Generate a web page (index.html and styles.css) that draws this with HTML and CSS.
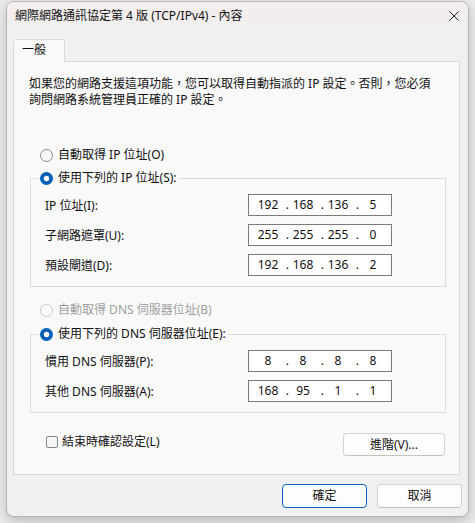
FILE: index.html
```html
<!DOCTYPE html>
<html lang="zh-Hant">
<head>
<meta charset="utf-8">
<title>網際網路通訊協定第 4 版 (TCP/IPv4) - 內容</title>
<link rel="stylesheet" href="styles.css">
</head>
<body>
<div class="window">
  <div class="titlebar">
    <span class="title">網際網路通訊協定第 4 版 (TCP/IPv4) - 內容</span>
    <span class="close"><svg width="10" height="10" viewBox="0 0 10 10"><path d="M0.5 0.5L9.5 9.5M9.5 0.5L0.5 9.5" stroke="#1b1b1b" stroke-width="1" fill="none"/></svg></span>
  </div>
  <div class="body">
    <div class="tabs"><div class="tab">一般</div></div>
    <div class="panel">
      <p class="intro">如果您的網路支援這項功能，您可以取得自動指派的 IP 設定。否則，您必須<br>詢問網路系統管理員正確的 IP 設定。</p>

      <div class="radio-row r-ip"><span class="radio"></span><span>自動取得 IP 位址(O)</span></div>
      <fieldset class="group g-ip">
        <legend><span class="radio checked"></span><span>使用下列的 IP 位址(S):</span></legend>
        <div class="fields">
          <span class="lbl">IP 位址(I):</span>
          <div class="ipbox"><span class="oct">192</span><span class="dot">.</span><span class="oct">168</span><span class="dot">.</span><span class="oct">136</span><span class="dot">.</span><span class="oct">5</span></div>
          <span class="lbl">子網路遮罩(U):</span>
          <div class="ipbox"><span class="oct">255</span><span class="dot">.</span><span class="oct">255</span><span class="dot">.</span><span class="oct">255</span><span class="dot">.</span><span class="oct">0</span></div>
          <span class="lbl">預設閘道(D):</span>
          <div class="ipbox"><span class="oct">192</span><span class="dot">.</span><span class="oct">168</span><span class="dot">.</span><span class="oct">136</span><span class="dot">.</span><span class="oct">2</span></div>
        </div>
      </fieldset>

      <div class="radio-row r-dns disabled"><span class="radio"></span><span>自動取得 DNS 伺服器位址(B)</span></div>
      <fieldset class="group g-dns">
        <legend><span class="radio checked"></span><span>使用下列的 DNS 伺服器位址(E):</span></legend>
        <div class="fields">
          <span class="lbl">慣用 DNS 伺服器(P):</span>
          <div class="ipbox"><span class="oct">8</span><span class="dot">.</span><span class="oct">8</span><span class="dot">.</span><span class="oct">8</span><span class="dot">.</span><span class="oct">8</span></div>
          <span class="lbl">其他 DNS 伺服器(A):</span>
          <div class="ipbox"><span class="oct">168</span><span class="dot">.</span><span class="oct">95</span><span class="dot">.</span><span class="oct">1</span><span class="dot">.</span><span class="oct">1</span></div>
        </div>
      </fieldset>

      <div class="bottom-row">
        <div class="check-row"><span class="checkbox"></span><span>結束時確認設定(L)</span></div>
        <button class="btn adv">進階(V)...</button>
      </div>
    </div>
    <div class="actions">
      <button class="btn primary">確定</button>
      <button class="btn">取消</button>
    </div>
  </div>
</div>
</body>
</html>
```

FILE: styles.css
```css
* { box-sizing: border-box; }
html, body { margin: 0; }
body {
  width: 475px;
  height: 523px;
  overflow: hidden;
  padding: 1px 0 0 6px;
  background: #ebebeb;
  font-family: "Noto Sans", "Noto Sans CJK TC", sans-serif;
  font-size: 12px;
  color: #111;
}
.window {
  width: 463px;
  height: 516px;
  border: 1px solid #b5b5b5;
  border-radius: 8px;
  background: #f0f0f0;
  box-shadow: 0 4px 12px rgba(0,0,0,0.2);
  overflow: hidden;
  display: flex;
  flex-direction: column;
}
.titlebar {
  height: 28px;
  flex: none;
  display: flex;
  align-items: center;
  justify-content: space-between;
  padding: 0 9px 0 8px;
  background: linear-gradient(#f6eded, #f2eeee 60%, #f0f0f0);
  line-height: 16px;
}
.close { display: flex; }
.body {
  flex: 1;
  display: flex;
  flex-direction: column;
  padding: 9px 6px 0 6px;
}
.tabs {
  display: flex;
  position: relative;
  z-index: 1;
  margin-bottom: -1px;
}
.tab {
  width: 52px;
  height: 23px;
  border: 1px solid #d9d9d9;
  border-bottom: none;
  border-radius: 3px 3px 0 0;
  background: #f9f9f9;
  padding-left: 8px;
  line-height: 20px;
}
.panel {
  margin-right: 2px;
  border: 1px solid #d9d9d9;
  background: #f9f9f9;
  padding: 14px 13px 18px 15px;
}
.intro {
  margin: 0;
  line-height: 16px;
  white-space: nowrap;
}
.radio-row {
  display: flex;
  align-items: center;
  gap: 5px;
  height: 16px;
  line-height: 16px;
  margin-left: 11px;
}
.r-ip { margin-top: 39px; }
.r-dns { margin-top: 15px; }
.disabled { color: #9e9e9e; }
.radio {
  width: 13px;
  height: 13px;
  border-radius: 50%;
  border: 1px solid #8a8a8a;
  background: #f6f6f6;
  flex: none;
}
.disabled .radio { border-color: #c8c8c8; background: #fbfbfb; }
.radio.checked {
  border: none;
  background: radial-gradient(circle, #ffffff 0 2.4px, #005fb8 3.2px);
}
.group {
  margin: 0 0 0 1px;
  padding: 0 0 10px 8px;
  border: 1px solid #dcdcdc;
  min-width: 0;
}
.g-ip { margin-top: 7px; }
.g-dns { margin-top: 8px; }
.group legend {
  display: flex;
  align-items: center;
  gap: 5px;
  padding: 0 2px 0 1px;
  line-height: 16px;
  height: 16px;
}
.fields {
  margin-top: 8px;
  padding-left: 6px;
  display: grid;
  grid-template-columns: 203px 144px;
  grid-auto-rows: 22px;
  row-gap: 8px;
  align-items: center;
}
.lbl { line-height: 16px; padding-top: 2px; }
.ipbox {
  width: 144px;
  height: 22px;
  border: 1px solid #7a7a7a;
  background: #fff;
  display: flex;
  align-items: center;
  padding-left: 5px;
  line-height: 20px;
}
.oct { width: 28px; text-align: center; }
.dot { width: 7px; text-align: right; }
.bottom-row {
  margin-top: 20px;
  display: flex;
  align-items: flex-start;
  height: 23px;
}
.check-row {
  display: flex;
  align-items: center;
  gap: 4px;
  height: 16px;
  line-height: 16px;
  margin: 1px 0 0 17px;
}
.checkbox {
  width: 12px;
  height: 12px;
  border: 1px solid #858585;
  border-radius: 2px;
  background: #f6f6f6;
  flex: none;
}
.btn {
  font: inherit;
  color: #111;
  background: #fdfdfd;
  border: 1px solid #d3d3d3;
  border-bottom-color: #c2c2c2;
  border-radius: 4px;
  padding: 0;
  line-height: 16px;
}
.adv {
  margin-left: auto;
  margin-right: 1px;
  width: 102px;
  height: 23px;
}
.actions {
  margin-top: 9px;
  display: flex;
  justify-content: flex-end;
  gap: 10px;
}
.actions .btn { width: 85px; height: 24px; }
.btn.primary { border: 1px solid #0a64bd; }
```
